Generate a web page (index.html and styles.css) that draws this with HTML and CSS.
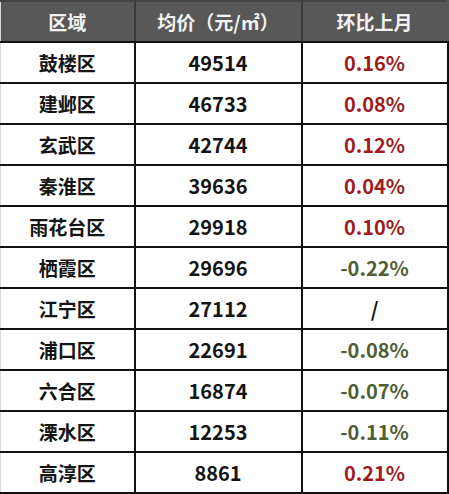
FILE: index.html
```html
<!DOCTYPE html>
<html lang="zh">
<head>
<meta charset="utf-8">
<link rel="stylesheet" href="styles.css">
</head>
<body>
<table class="price-table">
  <colgroup>
    <col class="c1"><col class="c2"><col class="c3">
  </colgroup>
  <thead>
    <tr class="head">
      <th>区域</th>
      <th>均价（元/㎡）</th>
      <th>环比上月</th>
    </tr>
  </thead>
  <tbody>
    <tr><td>鼓楼区</td><td class="num">49514</td><td class="num up">0.16%</td></tr>
    <tr><td>建邺区</td><td class="num">46733</td><td class="num up">0.08%</td></tr>
    <tr><td>玄武区</td><td class="num">42744</td><td class="num up">0.12%</td></tr>
    <tr><td>秦淮区</td><td class="num">39636</td><td class="num up">0.04%</td></tr>
    <tr><td>雨花台区</td><td class="num">29918</td><td class="num up">0.10%</td></tr>
    <tr><td>栖霞区</td><td class="num">29696</td><td class="num down">-0.22%</td></tr>
    <tr><td>江宁区</td><td class="num">27112</td><td class="num flat">/</td></tr>
    <tr><td>浦口区</td><td class="num">22691</td><td class="num down">-0.08%</td></tr>
    <tr><td>六合区</td><td class="num">16874</td><td class="num down">-0.07%</td></tr>
    <tr><td>溧水区</td><td class="num">12253</td><td class="num down">-0.11%</td></tr>
    <tr><td>高淳区</td><td class="num">8861</td><td class="num up">0.21%</td></tr>
  </tbody>
</table>
</body>
</html>
```
FILE: styles.css
```css
html, body {
  margin: 0;
  padding: 0;
  background: #ffffff;
}
.price-table {
  border-collapse: collapse;
  table-layout: fixed;
  width: 447px;
  font-family: "Noto Sans CJK SC", "Noto Sans", sans-serif;
  font-weight: 700;
  font-size: 19px;
  color: #141414;
}
.c1 { width: 134px; }
.c2 { width: 167px; }
.c3 { width: 146px; }
.price-table th,
.price-table td {
  border: 2px solid #111111;
  text-align: center;
  padding: 0;
  line-height: 1;
}
.price-table td:first-child,
.price-table th:first-child {
  border-left: 1px solid #d8d8d8;
}
.price-table td.num {
  font-size: 20px;
}
.head {
  height: 41px;
  background: #585858;
}
.head th {
  color: #f2f2f2;
  border-top: 2px solid #444444;
  border-left-color: #585858;
  border-right-color: #3a3a3a;
}
.head th:last-child {
  border-right-color: #585858;
}
tbody tr {
  height: 41px;
}
.up { color: #a01c1c; }
.down { color: #4f5e33; }
.flat { color: #141414; }
```
